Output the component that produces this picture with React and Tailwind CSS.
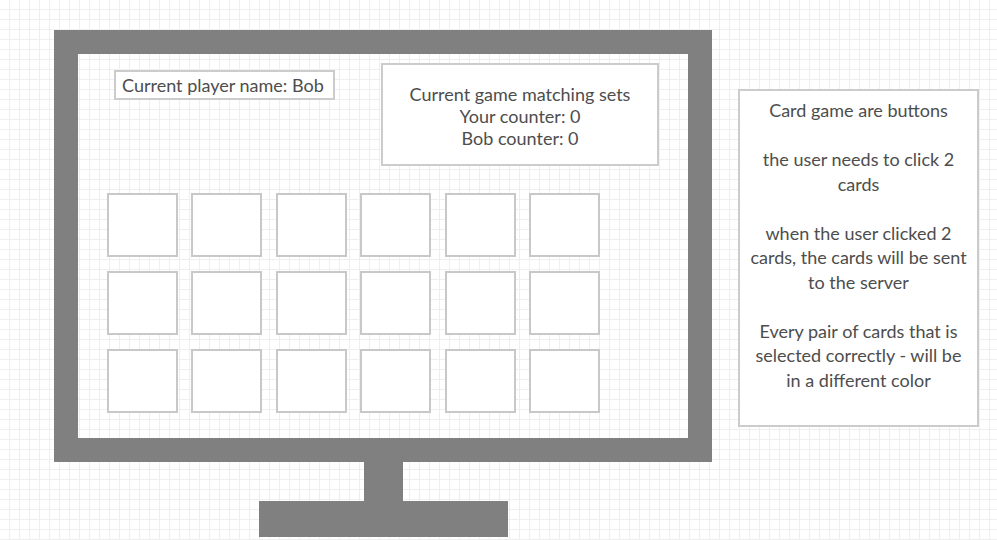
import React from "react";

const font = { fontFamily: "Lato, 'Open Sans', sans-serif" };

export default function App() {
  const cards = Array.from({ length: 18 });
  return (
    <div
      className="w-[997px] h-[540px] bg-white bg-[linear-gradient(to_right,#efefef_1px,transparent_1px),linear-gradient(to_bottom,#efefef_1px,transparent_1px)] bg-[size:10px_10px] bg-[position:-1px_-1px] overflow-hidden text-[#4d4d4d]"
      style={font}
    >
      <div className="flex items-start pl-[54px] pt-[30px]">
        {/* Monitor */}
        <div className="flex flex-col items-center">
          <div className="w-[658px] h-[432px] border-[24px] border-[#808080]">
            <div className="pl-[29px] pr-[29px] pt-[9px]">
              <div className="flex justify-between items-start">
                <div className="mt-[7px] ml-[7px] w-[221px] h-[30px] border-2 border-[#cccccc] bg-white flex items-center pl-[6px] text-[18px] leading-none whitespace-nowrap">
                  Current player name: Bob
                </div>
                <div className="w-[278px] h-[103px] border-2 border-[#cccccc] bg-white flex flex-col items-center justify-center pt-[3px] text-[18px] leading-[22px] text-center">
                  <div>Current game matching sets</div>
                  <div>Your counter: 0</div>
                  <div>Bob counter: 0</div>
                </div>
              </div>
              <div className="mt-[27px] grid grid-cols-[repeat(6,71px)] gap-x-[13.4px] gap-y-[14px]">
                {cards.map((_, i) => (
                  <button
                    key={i}
                    className="w-[71px] h-[64px] border-2 border-[#c8c8c8] bg-white"
                  />
                ))}
              </div>
            </div>
          </div>
          <div className="w-[39px] h-[39px] bg-[#808080]" />
          <div className="w-[249px] h-[36px] bg-[#808080]" />
        </div>

        {/* Note */}
        <div className="ml-[26px] mt-[59px] w-[241px] h-[338px] border-2 border-[#cccccc] bg-white px-[8px] pt-[7px] text-[18px] leading-[24.5px] text-center flex flex-col gap-[24.5px]">
          <div>Card game are buttons</div>
          <div>the user needs to click 2 cards</div>
          <div>when the user clicked 2 cards, the cards will be sent to the server</div>
          <div>Every pair of cards that is selected correctly - will be in a different color</div>
        </div>
      </div>
    </div>
  );
}
